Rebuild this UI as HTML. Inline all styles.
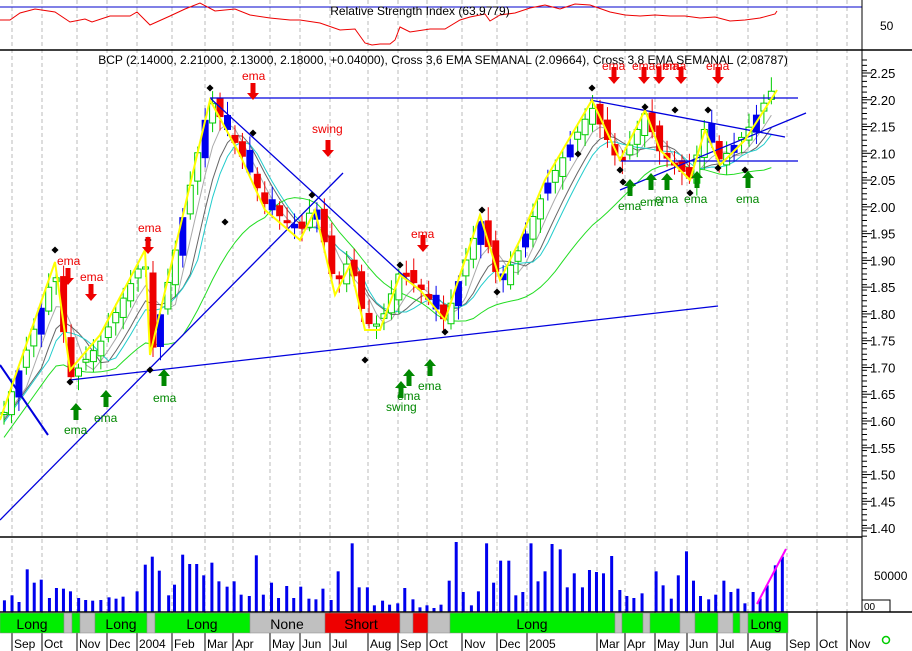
<!DOCTYPE html>
<html><head><meta charset="utf-8"><style>
html,body{margin:0;padding:0;background:#fff;width:912px;height:651px;overflow:hidden}
svg{display:block}
text{font-family:"Liberation Sans",sans-serif}
</style></head><body>
<svg id="s" width="912" height="651" viewBox="0 0 912 651" xmlns="http://www.w3.org/2000/svg">
<rect width="912" height="651" fill="#fff"/>
<g id="grid" stroke="#bbb" stroke-dasharray="4,3" stroke-width="1"></g>
<line x1="0" y1="7" x2="862" y2="7" stroke="#0000cc"/>
<polyline fill="none" stroke="#e00" stroke-width="1" points="0,20 10,20 20,13 35,9 55,12 70,22 85,19 92,22 110,16 130,16 137,12 150,25 170,16 185,9 200,3 215,11 235,9 250,15 270,18 290,20 300,20 320,23 340,30 355,29 365,43 372,45 380,44 390,44 395,40 400,27 410,32 430,29 445,29 460,20 470,17 485,14 490,21 500,15 515,13 530,8 545,5 560,9 575,4 590,5 610,12 625,15 640,16 655,15 670,16 685,16 700,18 715,17 730,21 745,20 760,18 775,14 777,11"/>
<text x="420" y="15" font-size="12" text-anchor="middle" fill="#000">Relative Strength Index (63.9779)</text>
<text x="880" y="30" font-size="12" fill="#000">50</text>
<line x1="0" y1="50" x2="912" y2="50" stroke="#000" stroke-width="1.5"/>
<line x1="862" y1="0" x2="862" y2="612" stroke="#000"/>
<text x="443" y="64" font-size="12" text-anchor="middle" fill="#000">BCP (2.14000, 2.21000, 2.13000, 2.18000, +0.04000), Cross 3,6 EMA SEMANAL (2.09664), Cross 3,8 EMA SEMANAL (2.08787)</text>
<g id="axis" font-size="13" fill="#000"></g>
<g id="ma"></g>
<g id="candles"></g>
<g stroke="#0000dd" stroke-width="1.3" fill="none">
<line x1="210" y1="98" x2="798" y2="98"/>
<line x1="620" y1="161" x2="798" y2="161"/>
<line x1="590" y1="100" x2="785" y2="137"/>
<line x1="620" y1="190" x2="806" y2="113"/>
<line x1="70" y1="380" x2="718" y2="306"/>
<line x1="210" y1="98" x2="430" y2="300"/>
<line x1="0" y1="520" x2="343" y2="173"/>
<line x1="0" y1="365" x2="48" y2="435" stroke-width="2"/>
</g>
<polyline fill="none" stroke="#ff0" stroke-width="2" points="0,420 55,262 70,370 100,335 145,250 150,355 210,100 240,155 265,210 300,240 315,210 335,295 350,265 365,330 380,330 400,275 420,290 445,320 480,215 500,280 520,240 545,180 592,100 620,160 645,110 660,150 690,180 705,130 720,165 745,140 777,90"/>
<g id="dots" fill="#000"></g>
<g id="arrows"></g>
<g font-size="12">
<g fill="#e00">
<text x="57" y="265">ema</text><text x="80" y="281">ema</text><text x="138" y="232">ema</text><text x="242" y="80">ema</text><text x="312" y="133">swing</text><text x="411" y="238">ema</text><text x="602" y="70">ema</text><text x="632" y="70">emaema</text><text x="663" y="70">ema</text><text x="706" y="70">ema</text>
</g>
<g fill="#080">
<text x="64" y="434">ema</text><text x="94" y="422">ema</text><text x="153" y="402">ema</text><text x="386" y="411">swing</text><text x="397" y="400">ema</text><text x="418" y="390">ema</text><text x="618" y="210">ema</text><text x="640" y="206">ema</text><text x="655" y="203">ema</text><text x="684" y="203">ema</text><text x="736" y="203">ema</text>
</g></g>
<line x1="0" y1="537" x2="862" y2="537" stroke="#000" stroke-width="1.5"/>
<g id="vol" fill="#0000ee"></g>
<line x1="757" y1="604" x2="786" y2="549" stroke="#f0f" stroke-width="2"/>
<text x="874" y="580" font-size="12" fill="#000">50000</text>
<rect x="862" y="600" width="28" height="12" fill="#fff" stroke="#000"/>
<text x="864" y="610" font-size="10" fill="#000">00</text>
<line x1="0" y1="612" x2="912" y2="612" stroke="#000" stroke-width="1.5"/>
<g id="bar" stroke="#888" stroke-width="0.5"></g>
<g font-size="14" text-anchor="middle" fill="#000">
<text x="32" y="629">Long</text><text x="121" y="629">Long</text><text x="202" y="629">Long</text><text x="287" y="629">None</text><text x="361" y="629">Short</text><text x="532" y="629">Long</text><text x="766" y="629">Long</text>
</g>
<g id="months" font-size="12" fill="#000"></g>
<circle cx="886" cy="640" r="3.5" fill="none" stroke="#0c0" stroke-width="1.5"/>
</svg>
<script>
var NS="http://www.w3.org/2000/svg";
function el(p,t,a){var e=document.createElementNS(NS,t);for(var k in a)e.setAttribute(k,a[k]);document.getElementById(p).appendChild(e);return e;}
var mx=[12,42,77,107,137,172,205,233,270,300,330,368,398,427,462,497,527,597,625,655,687,717,748,787,817,847];
mx.forEach(function(x){el("grid","line",{x1:x,y1:0,x2:x,y2:612});el("grid","line",{x1:x,y1:612,x2:x,y2:651,"stroke-dasharray":"none",stroke:"#000"});});
var lab=["Sep","Oct","Nov","Dec","2004","Feb","Mar","Apr","May","Jun","Jul","Aug","Sep","Oct","Nov","Dec","2005","Mar","Apr","May","Jun","Jul","Aug","Sep","Oct","Nov"];
mx.forEach(function(x,i){var t=el("months","text",{x:x+2,y:648});t.textContent=lab[i];});
for(var i=0;i<18;i++){var p=(2.25-i*0.05).toFixed(2);var y=73+i*26.77;var t=el("axis","text",{x:870,y:y+5});t.textContent=p;el("axis","line",{x1:862,y1:y,x2:872,y2:y,stroke:"#000"});}
for(var y=60;y<537;y+=5.35)el("axis","line",{x1:862,y1:y,x2:867,y2:y,stroke:"#000"});
var zz=[[0,420],[55,262],[70,370],[100,335],[145,250],[150,355],[210,100],[240,155],[265,210],[300,240],[315,210],[335,295],[350,265],[365,330],[380,330],[400,275],[420,290],[445,320],[480,215],[500,280],[520,240],[545,180],[592,100],[620,160],[645,110],[660,150],[690,180],[705,130],[720,165],[745,140],[777,90]];
function zy(x){for(var i=1;i<zz.length;i++)if(x<=zz[i][0]){var a=zz[i-1],b=zz[i];return a[1]+(b[1]-a[1])*(x-a[0])/(b[0]-a[0]);}return 90;}
var cl=[],prev=zy(0);
for(var x=4;x<=777;x+=7.45){var c=zy(x)+Math.sin(x*1.7)*8;var o=prev+Math.cos(x*2.3)*6;var hi=Math.min(o,c)-4-Math.abs(Math.sin(x))*10;var lo=Math.max(o,c)+4+Math.abs(Math.cos(x))*10;
var up=c<o;var col=up?"#00cc00":"#ee0000";if(Math.sin(x*3.1)>0.8)col="#0000ee";
el("candles","line",{x1:x,y1:hi,x2:x,y2:lo,stroke:col});
var h=Math.max(2,Math.abs(c-o));el("candles","rect",{x:x-3,y:Math.min(o,c),width:6,height:h,fill:up&&col!="#0000ee"?"#fff":col,stroke:col});
cl.push([x,c]);prev=c;}
function ma(n,col,off){var pts=[];for(var i=0;i<cl.length;i++){var s=0,k=0;for(var j=Math.max(0,i-n+1);j<=i;j++){s+=cl[j][1];k++;}pts.push(cl[i][0]+","+(s/k+off));}el("ma","polyline",{points:pts.join(" "),fill:"none",stroke:col,"stroke-width":1});}
ma(4,"#aaa",6);ma(6,"#666",8);ma(7,"#22cccc",10);ma(16,"#22dd22",25);
[[55,250],[70,382],[148,240],[150,370],[210,88],[253,133],[225,222],[312,195],[365,360],[400,265],[445,332],[482,210],[497,292],[592,88],[620,170],[578,154],[645,107],[623,182],[675,110],[708,110],[690,193],[718,168],[745,170]].forEach(function(d){el("dots","rect",{x:d[0]-2.5,y:d[1]-2.5,width:5,height:5,transform:"rotate(45 "+d[0]+" "+d[1]+")"});});
function arrow(x,y,dn,col){var p=dn?[[x-2.5,y-10],[x+2.5,y-10],[x+2.5,y],[x+6,y],[x,y+7],[x-6,y],[x-2.5,y]]:[[x-2.5,y+10],[x+2.5,y+10],[x+2.5,y],[x+6,y],[x,y-7],[x-6,y],[x-2.5,y]];el("arrows","polygon",{points:p.map(String).join(" "),fill:col});}
[[68,278],[91,294],[148,247],[253,93],[328,150],[423,245],[614,77],[644,77],[659,77],[681,77],[718,77]].forEach(function(a){arrow(a[0],a[1],1,"#e00");});
[[76,410],[106,397],[164,376],[401,388],[409,376],[430,366],[630,186],[651,180],[667,180],[697,178],[748,178]].forEach(function(a){arrow(a[0],a[1],0,"#080");});
var v=[[5,35],[18,50],[30,30],[44,128],[56,88],[68,97],[82,42],[94,72],[106,70],[118,62],[132,42],[144,36],[156,34],[170,36],[184,44],[196,40],[208,46],[220,3],[232,62],[246,142],[258,166],[270,124],[286,50],[296,82],[310,172],[322,144],[334,144],[346,110],[360,148],[372,92],[386,76],[398,92],[410,52],[424,48],[436,170],[448,52],[462,88],[474,42],[488,78],[500,42],[512,76],[526,40],[538,38],[550,70],[564,36],[576,122],[600,206],[612,74],[626,74],[638,20],[652,34],[664,22],[678,26],[690,72],[704,38],[716,14],[728,20],[740,12],[752,22],[766,94],[778,210],[790,60],[804,20],[816,62],[830,206],[842,88],[854,154],[868,154],[880,50],[892,60],[906,206],[918,92],[930,122],[942,204],[956,188],[968,74],[980,116],[994,74],[1006,126],[1018,120],[1030,116],[1044,168],[1058,66],[1070,48],[1082,42],[1096,56],[1120,122],[1132,80],[1146,40],[1158,110],[1172,182],[1184,94],[1196,48],[1210,38],[1222,52],[1236,94],[1248,60],[1260,70],[1272,26],[1286,60],[1298,40],[1310,80],[1324,140],[1336,166]];
v.forEach(function(b){var x=b[0]/1.711,h=b[1]/3;el("vol","rect",{x:x,y:612-h,width:3,height:h});});
var segs=[[0,64,"#00ee00"],[64,72,"#c0c0c0"],[72,80,"#00ee00"],[80,95,"#c0c0c0"],[95,147,"#00ee00"],[147,155,"#c0c0c0"],[155,250,"#00ee00"],[250,325,"#c0c0c0"],[325,400,"#ee0000"],[400,413,"#c0c0c0"],[413,428,"#ee0000"],[428,450,"#c0c0c0"],[450,615,"#00ee00"],[615,622,"#c0c0c0"],[622,643,"#00ee00"],[643,650,"#c0c0c0"],[650,680,"#00ee00"],[680,695,"#c0c0c0"],[695,718,"#00ee00"],[718,733,"#c0c0c0"],[733,740,"#00ee00"],[740,748,"#c0c0c0"],[748,788,"#00ee00"]];
segs.forEach(function(s){el("bar","rect",{x:s[0],y:613,width:s[1]-s[0],height:20,fill:s[2]});});
</script>
</body></html>
